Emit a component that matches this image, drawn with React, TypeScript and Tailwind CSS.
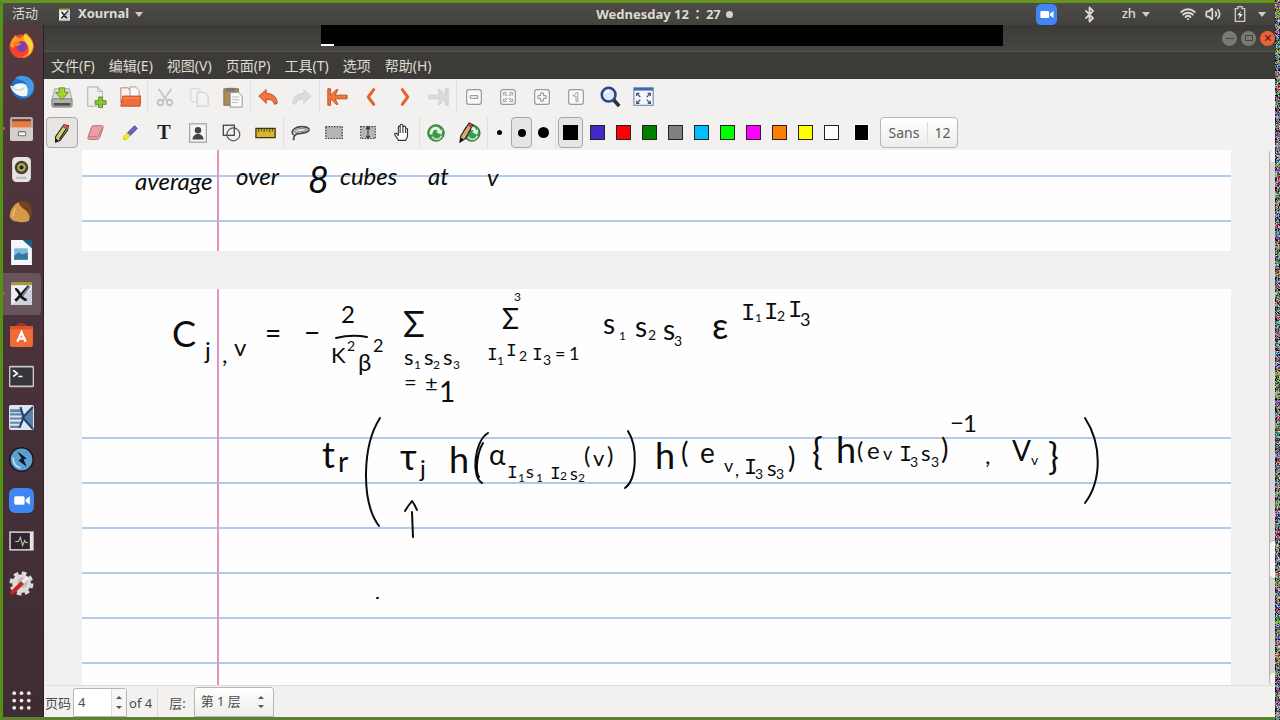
import { FC, ReactNode } from "react"
import { Bluetooth, Wifi, Volume2 } from "lucide-react"

interface IconProps{
    children:ReactNode,
    className?:string,
}
const Icon:FC<IconProps> = ({children,className="w-6 h-6"})=>(
    <svg viewBox="0 0 24 24" fill="none" className={className} aria-hidden="true">{children}</svg>
)

const ZoomLogo = ()=>(
    <>
        <rect width="24" height="24" rx="6" fill="#3f86f5"/>
        <rect x="5" y="8" width="10" height="8" rx="1.5" fill="#fff"/>
        <path d="M16 11l4-3v8l-4-3z" fill="#fff"/>
    </>
)
const XournalLogo = ()=>(
    <>
        <rect x="2" y="2" width="20" height="21" fill="#f0f0f2"/>
        <rect x="2" y="1" width="20" height="3" fill="#a59a3c"/>
        <path d="M2 23l20-16v16z" fill="#cfd2da"/>
        <path d="M6 8c4-1 4 10 11 10M19 5L8 17l-2 2" stroke="#15151c" strokeWidth="2.6"/>
        <path d="M20 5l-7 9" stroke="#6d87ae" strokeWidth="2"/>
    </>
)

const launchers:{name:string,icon:ReactNode,running?:boolean,active?:boolean}[] = [
    {name:"Firefox",icon:<>
        <circle cx="12" cy="13" r="11.5" fill="#f4432f"/>
        <path d="M1 12C2 7 5 4 6 2c1 2 3 3 5 3 2-2 4-3 5-5 5 4 8 8 7.500 14-1 7-7 10-12 9 6-1 9-5 8-10-1-4-4-5-7-5C8 8 5 10 5 14c-2 0-4-1-4-2z" fill="#ff9a1f"/>
        <path d="M15 1c4 3 8 7 8 12-1 4-3 7-5 8 2-5 1-9-2-12-2-2-2-5-1-8z" fill="#ffd43a"/>
        <circle cx="12" cy="13" r="5" fill="#7a3fb4"/>
        <path d="M4 9c3-1 5 0 8 1-1 2-4 2-5 3-1-1-3-2-3-4z" fill="#ff7a22"/>
    </>},
    {name:"Thunderbird",icon:<>
        <circle cx="13" cy="12" r="11" fill="#1f6fc4"/>
        <path d="M6 3c6-5 17-1 18 7 0 7-4 11-9 12 5-6 4-13-1-16-3-2-6-2-8-3z" fill="#3f9be8"/>
        <path d="M1 10l3 1c2-3 8-4 12-2 2 2 3 6 1 11-5 2-13-1-16-10z" fill="#f3f6fa"/>
        <path d="M3 12c4 3 8 4 12 0" stroke="#c2cfdd" strokeWidth="1.200"/>
    </>},
    {name:"Files",running:true,icon:<>
        <rect x="1" y="1" width="22" height="23" rx="2" fill="#b5afa8"/>
        <rect x="3" y="3" width="18" height="3" fill="#6b4436"/>
        <path d="M3 5h18v6H3z" fill="#ee7a3e"/>
        <path d="M1 11h22v11a2 2 0 0 1-2 2H3a2 2 0 0 1-2-2z" fill="#d3cfca"/>
        <rect x="9" y="15" width="7" height="4" rx="1" fill="#f4f2f0" stroke="#77716b"/>
    </>},
    {name:"Rhythmbox",icon:<>
        <rect x="3" y="0" width="18" height="24" rx="4" fill="#e6e4e2"/>
        <circle cx="12" cy="10" r="6.500" fill="#44443a"/>
        <circle cx="12" cy="10" r="4" fill="#b9b047"/>
        <circle cx="12" cy="10" r="2" fill="#2b2b22"/>
        <path d="M7 20h10" stroke="#bdbab7" strokeWidth="2"/>
    </>},
    {name:"Acorn",icon:<>
        <path d="M8 3c7-3 14 1 14 9 0 3-1 5-3 8z" fill="#74441f"/>
        <path d="M19 4c1-2 3-3 4-2v3" stroke="#5b3418" strokeWidth="1.500"/>
        <path d="M9 3C3 6 0 13 1 18c3 5 12 5 18 3 2-4 0-8-4-11-3-2-5-4-6-7z" fill="#d49a4a"/>
        <path d="M6 9c-2 3-2 6-2 8" stroke="#e9bd77" strokeWidth="1.500"/>
    </>},
    {name:"LibreOffice Draw",icon:<>
        <path d="M2 0h13l7 8v16H2z" fill="#f4f8fa"/>
        <path d="M13 0h9v8z" fill="#1f5f86"/>
        <rect x="5" y="8" width="13" height="11" fill="#7db9dc"/>
        <path d="M5 15l4-3 4 2 5-2v7H5z" fill="#33789f"/>
    </>},
    {name:"Xournal",running:true,active:true,icon:<XournalLogo/>},
    {name:"Ubuntu Software",icon:<>
        <path d="M7 5c0-5 10-5 10 0" stroke="#b8352a" strokeWidth="2"/>
        <path d="M1 3h22v18a2 2 0 0 1-2 2H3a2 2 0 0 1-2-2z" fill="#ef6c38"/>
        <path d="M1 3h22v3H1z" fill="#d9542b"/>
        <path d="M8 18l4-9 4 9M9 15h6" stroke="#fff" strokeWidth="2.200"/>
    </>},
    {name:"Terminal",icon:<>
        <rect x="0.500" y="2.500" width="23" height="19" rx="1" fill="#35353a" stroke="#c9c6c5" strokeWidth="1.600"/>
        <path d="M4 6l4 3-4 3M9 12h4" stroke="#fff" strokeWidth="1.600"/>
    </>},
    {name:"Xmgrace",icon:<>
        <rect width="24" height="24" rx="2" fill="#dde6f0"/>
        <path d="M1 4h10l3 3H1zM1 8h13v2H1zM1 12h12v2H1zM1 16h11v2H1zM1 20h9v2H1z" fill="#6483ad"/>
        <path d="M23 2L13 12l10 11z" fill="#5d7fae"/>
        <path d="M11 2l3 10-4 10M23 2L13 12l10 11" stroke="#24426e" strokeWidth="2"/>
    </>},
    {name:"Maple",icon:<>
        <circle cx="12" cy="12" r="11.200" fill="#5f9fd0" stroke="#121a28" strokeWidth="1.500"/>
        <path d="M4 10c0 6 3 9 7 10" stroke="#d9ebf8" strokeWidth="1.200"/>
        <path d="M8 4l9 7-3 1 3 7-8-6 3-2z" fill="#10182a"/>
    </>},
    {name:"Zoom",icon:<ZoomLogo/>},
    {name:"System Monitor",icon:<>
        <rect x="1" y="3" width="22" height="17" fill="#2e2530" stroke="#d5cdd2" strokeWidth="1.500"/>
        <path d="M20 3h3v17h-3z" fill="#e8e0e4"/>
        <path d="M6 12h3l2-4 2 8 2-5 1 2h2" stroke="#c9c3a0"/>
    </>},
    {name:"Settings",icon:<>
        <circle cx="12" cy="12" r="9" fill="#dedbda"/>
        <circle cx="12" cy="12" r="10" stroke="#dedbda" strokeWidth="3" strokeDasharray="4.500 3.350"/>
        <circle cx="13" cy="11" r="5" fill="#c2bcbb"/>
        <path d="M2 22L13 11" stroke="#c3272b" strokeWidth="4"/>
        <path d="M13 11l5-5" stroke="#f2f0ef" strokeWidth="3"/>
    </>},
]

const Arrow = ({d}:{d:string})=><path d={d} fill="#f0763c" stroke="#bd4a1c" strokeLinejoin="round"/>
const GreyBox = ({children}:{children:ReactNode})=>(
    <><rect x="4" y="4" width="16" height="16" rx="2.500" fill="#f8f8f7" stroke="#9a9a96" strokeWidth="1.300"/>{children}</>
)
const Recycle = ()=>(
    <>
        <circle cx="12" cy="12" r="9" fill="#3c9a4a" stroke="#267034"/>
        <path d="M5 13c0-9 10-10 12-4l2-1-1 6-6-3 2-1c-2-3-6-1-6 4z" fill="#e5f6e5"/>
        <path d="M18 15c-2 5-8 5-10 1" stroke="#bfe6c2" strokeWidth="1.800"/>
    </>
)
const Pencil = ()=>(
    <>
        <path d="M11 1l4 2-8 15-6 4 1-7z" fill="#d9a878" stroke="#222" strokeWidth="1.200"/>
        <path d="M1 22l1-5 3 2z" fill="#111"/>
        <path d="M10 3l4 2" stroke="#c23b3b" strokeWidth="2.500"/>
    </>
)

interface Tool{
    name:string,
    icon:ReactNode,
    active?:boolean,
}
const mainTools:Tool[][] = [
    [
        {name:"保存",icon:<>
            <path d="M4 3h16l3 12H1z" fill="#dadad8" stroke="#a5a5a2"/>
            <rect x="1" y="14" width="22" height="9" rx="1.500" fill="#b0b2af" stroke="#73756f"/>
            <path d="M3 20h18" stroke="#4c4e4a" strokeWidth="3"/>
            <path d="M9 2h6v5h4l-7 8-7-8h4z" fill="#a5d433" stroke="#5f8f14"/>
        </>},
        {name:"新建",icon:<>
            <path d="M3 1h11l5 5v16H3z" fill="#f0f0ee" stroke="#aaa"/>
            <path d="M14 1v5h5" stroke="#aaa"/>
            <path d="M15 12h4v4h4v4h-4v4h-4v-4h-4v-4h4z" fill="#8dc63a" stroke="#54861a"/>
        </>},
        {name:"打开",icon:<>
            <path d="M2 2h8l2 3h8v13H2z" fill="#fdf3ee" stroke="#b27a60"/>
            <path d="M12 1h6l4 4v8H12z" fill="#fafafa" stroke="#999"/>
            <path d="M4 11h20l-1 11H2z" fill="#f06c38" stroke="#c24a1c"/>
            <path d="M4 13h18" stroke="#f99a72"/>
        </>},
    ],
    [
        {name:"剪切",icon:<>
            <path d="M5 3l9 13M19 3l-9 13" stroke="#c9c7c5" strokeWidth="2"/>
            <circle cx="7" cy="18" r="3" stroke="#c4c2c0" strokeWidth="2"/>
            <circle cx="17" cy="18" r="3" stroke="#c4c2c0" strokeWidth="2"/>
        </>},
        {name:"复制",icon:<>
            <path d="M3 3h10v14H3z" fill="#f3f2f1" stroke="#d3d1cf"/>
            <path d="M10 7h8l4 4v11H10z" fill="#f3f2f1" stroke="#cac8c6"/>
        </>},
        {name:"粘贴",icon:<>
            <path d="M2 3h16v18H2z" fill="#a98a58" stroke="#7d6b4c"/>
            <path d="M5 2h9v4H5z" fill="#77766f"/>
            <path d="M9 7h9l4 4v12H9z" fill="#fafafa" stroke="#8f8f8b"/>
            <path d="M11 12h8M11 15h8M11 18h6" stroke="#b4b4b0"/>
        </>},
    ],
    [
        {name:"撤销",icon:<Arrow d="M2 11l8-7v4c7 0 12 4 12 11l-3 1c-1-4-4-6-9-5v4z"/>},
        {name:"重做",icon:<path d="M22 11l-8-7v4C7 8 2 12 2 19l3 1c1-4 4-6 9-5v4z" fill="#dddbd9" stroke="#d4d2d0"/>},
    ],
    [
        {name:"第一页",icon:<Arrow d="M2 3h3v7l6-6h2l-3 6h13v4H10l3 6h-2l-6-6v7H2z"/>},
        {name:"上一页",icon:<path d="M15 4l-6 8 6 8" stroke="#e2622c" strokeWidth="3.200" strokeLinecap="round" strokeLinejoin="round"/>},
        {name:"下一页",icon:<path d="M9 4l6 8-6 8" stroke="#e2622c" strokeWidth="3.200" strokeLinecap="round" strokeLinejoin="round"/>},
        {name:"最后一页",icon:<path d="M1 10h12l-2-6h2l6 6V3h3v18h-3v-7l-6 6h-2l2-6H1z" fill="#dddbd9" stroke="#cfcdcb"/>},
    ],
    [
        {name:"缩小",icon:<GreyBox><path d="M8 10.500h8v3H8z" stroke="#888"/></GreyBox>},
        {name:"页宽",icon:<GreyBox><path d="M7 10V7h3l-1 1 2 2-1 1-2-2zM17 10V7h-3l1 1-2 2 1 1 2-2zM7 14v3h3l-1-1 2-2-1-1-2 2zM17 14v3h-3l1-1-2-2 1-1 2 2z" stroke="#888" strokeWidth=".8"/></GreyBox>},
        {name:"放大",icon:<GreyBox><path d="M10.500 7.500h3v3h3v3h-3v3h-3v-3h-3v-3h3z" stroke="#888"/></GreyBox>},
        {name:"正常大小",icon:<GreyBox><path d="M9 10c2-1 3-3 5-3v10h-2v-6h-3z" stroke="#999"/></GreyBox>},
        {name:"设置缩放",icon:<>
            <path d="M16 15l6 7" stroke="#2c2c40" strokeWidth="4"/>
            <circle cx="10.500" cy="9.500" r="7.500" fill="#dfe8f6" stroke="#34408e" strokeWidth="2.800"/>
            <path d="M7 8c1-2 3-3 5-2" stroke="#fff" strokeWidth="1.500"/>
        </>},
        {name:"全屏",icon:<>
            <rect x="1" y="2" width="21" height="19" fill="#f3f6fb" stroke="#5575a8"/>
            <path d="M1 2h21v3H1z" fill="#3d6bb3"/>
            <path d="M4 11V8h3M16 8h3v3M4 16v3h3M16 19h3v-3M4 8l4 4M19 8l-4 4M4 19l4-4M19 19l-4-4" stroke="#444f68" strokeWidth="1.200"/>
        </>},
    ],
]

const penTools:Tool[][] = [
    [
        {name:"钢笔",active:true,icon:<>
            <path d="M14 3l5 1-1 5-8 11-5 2 0-6z" fill="#d3cf6a" stroke="#222" strokeWidth="1.200"/>
            <path d="M14 3l5 1-1 4-5-2z" fill="#e04848"/>
            <path d="M17 7l-8 12" stroke="#222" strokeWidth="1.200"/>
            <path d="M5 22l0-4 3 2z" fill="#111"/>
        </>},
        {name:"橡皮",icon:<>
            <path d="M9 4h9c2 0 2 1 1.500 3L16 17c-1 2-2 2-3 2H5c-2 0-2-1-1.500-3L7 6c0-1 1-2 2-2z" fill="#eda0a4" stroke="#a5686c"/>
            <path d="M4 16h9c1 0 2-1 2-2l4-8" stroke="#b97b7f"/>
        </>},
        {name:"荧光笔",icon:<>
            <path d="M17 4l3 3-8 8-3-3z" fill="#6a62c8" stroke="#55519a"/>
            <path d="M9 12l3 3-4 4H5v-3z" fill="#f5ee22" stroke="#cfc423"/>
        </>},
        {name:"文本",icon:<text x="12" y="19" textAnchor="middle" className="font-['Liberation_Serif',serif] font-bold text-[22px]" fill="#1f1f1f">T</text>},
        {name:"图像",icon:<>
            <rect x="3" y="2" width="18" height="20" fill="#f5f5f4" stroke="#888"/>
            <circle cx="12" cy="9" r="3.500" fill="#444"/>
            <path d="M6 19c0-8 12-8 12 0z" fill="#444"/>
        </>},
        {name:"形状识别",icon:<>
            <rect x="2.500" y="3.500" width="12" height="11" stroke="#333" strokeWidth="1.300"/>
            <circle cx="13.500" cy="13.500" r="7" stroke="#555" strokeWidth="1.300"/>
        </>},
        {name:"直尺",icon:<>
            <path d="M1 7h21v10H1z" fill="#d7b52c" stroke="#3e3618" strokeWidth="1.400"/>
            <path d="M4 7v4M7 7v3M10 7v4M13 7v3M16 7v4M19 7v3" stroke="#3e3618"/>
        </>},
    ],
    [
        {name:"选择区域",icon:<>
            <path d="M5 14C1 11 6 5 14 5c8 0 10 4 5 6-4 2-9 1-12 3-2 1-2 4-2 6" stroke="#4d4d4d" strokeWidth="2"/>
            <path d="M6 12c0-3 4-5 9-5 5 0 5 2 1 3-3 1-6 0-9 2" stroke="#8d8d8d" strokeWidth="1.300"/>
        </>},
        {name:"选择矩形",icon:<rect x="3" y="5" width="18" height="13" fill="#b5b5b3" stroke="#333" strokeWidth="1.300" strokeDasharray="1.500 1.500"/>},
        {name:"垂直空间",icon:<>
            <rect x="4" y="5" width="16" height="13" fill="#b5b5b3" stroke="#333" strokeWidth="1.300" strokeDasharray="1.500 1.500"/>
            <path d="M12 5v13M10 8l2-3 2 3M10 15l2 3 2-3" stroke="#333" strokeWidth="1.200"/>
        </>},
        {name:"手形工具",icon:<path d="M8 20c-1-3-4-5-4-7 1-2 3 0 4 2V6c0-2 2-2 2 0V4c0-2 3-2 3 0v2c0-2 3-2 3 0v2c0-2 2-1 2 0v7c0 2-1 3-2 5zM10 6v6M13 6v6M16 8v4" fill="#fff" stroke="#333" strokeWidth="1.200"/>},
    ],
    [
        {name:"默认",icon:<Recycle/>},
        {name:"默认笔",icon:<><g className="translate-x-[2px]"><Recycle/></g><Pencil/></>},
    ],
]

const colours:[string,string][] = [
    ["蓝色","bg-[#4228c8]"],
    ["红色","bg-[#ff0000]"],
    ["绿色","bg-[#008000]"],
    ["灰色","bg-[#808080]"],
    ["浅蓝","bg-[#00bfff]"],
    ["浅绿","bg-[#00ff00]"],
    ["洋红","bg-[#ff00ff]"],
    ["橙色","bg-[#ff8000]"],
    ["黄色","bg-[#ffff00]"],
    ["白色","bg-white"],
]

const menus = ["文件(F)","编辑(E)","视图(V)","页面(P)","工具(T)","选项","帮助(H)"]

const pressed = "rounded-sm border border-[#a9a7a4] bg-[#e6e5e3]"

const Separator = ({tight}:{tight?:boolean})=><span className={tight ? "-mr-px h-8 w-px bg-[#e3e1df]" : "h-8 w-px bg-[#e3e1df]"}/>

const ToolGroups = ({groups,tight}:{groups:Tool[][],tight?:boolean})=>(
    <>
        {groups.map((group,i)=>(
            <div key={i} className="flex items-center">
                {group.map((tool)=>(
                    <button key={tool.name} aria-label={tool.name} className="flex h-[31px] w-[34px] items-center justify-center">
                        <span className={tool.active ? `flex h-[31px] w-8 items-center justify-center ${pressed}` : "flex"}><Icon className="h-[22px] w-[22px]">{tool.icon}</Icon></span>
                    </button>
                ))}
                {(tight || i<groups.length-1) && <Separator tight={tight}/>}
            </div>
        ))}
    </>
)

const Caret = ()=><svg viewBox="0 0 8 5" className="h-[5px] w-2" aria-hidden="true"><path d="M0 0h8L4 5z" fill="#d0ccc5"/></svg>

// [text, x, baseline, size class]
type Mark = [string,number,number,string]
const s12 = "text-[12px]", s14 = "text-[14px]", s18 = "text-[18px]", s22 = "text-[22px]", s24 = "text-[24px]", s28 = "text-[28px]", s36 = "text-[36px]"

const firstPage:Mark[] = [
    ["average",53,40,s24],["over",154,35,s24],["8",226,43,s36],["cubes",258,35,s24],["at",346,35,s24],["v",405,36,s24],
]
const secondPage:Mark[] = [
    ["C",90,58,s36],["j",123,70,s24],[",",140,74,s24],["v",152,67,s24],["=",183,54,s28],["−",222,54,s28],
    ["2",259,34,s24],["K",249,74,s22],["2",265,62,s14],["β",276,82,s24],["2",291,63,s18],
    ["Σ",321,48,s36],["s",322,76,s22],["1",332,80,s12],["s",342,76,s22],["2",351,80,s12],["s",361,76,s22],["3",371,80,s12],
    ["=",322,101,s22],["±",343,102,s22],["1",357,113,s28],
    ["Σ",420,40,s28],["3",432,12,s12],
    ["I",405,71,s18],["1",415,76,s12],["I",424,67,s18],["2",437,72,s14],["I",450,71,s18],["3",461,76,s14],["=",473,71,s18],["1",487,71,s18],
    ["s",521,45,s28],["1",537,51,s12],["s",553,48,s28],["2",566,51,s14],["s",581,51,s28],["3",592,57,s14],["ε",630,50,s36],
    ["I",659,31,s24],["1",673,33,s12],["I",682,30,s24],["2",695,32,s14],["I",706,28,s24],["3",718,37,s18],
    ["t",240,179,s36],["r",256,183,s28],["τ",318,181,s36],["j",338,188,s24],["h",367,184,s36],["α",407,176,s28],
    ["I",425,189,s18],["1",436,193,s12],["s",444,189,s18],["1",454,193,s12],["I",468,190,s18],["2",478,191,s12],["s",488,191,s18],["2",496,193,s12],
    ["(",502,175,s24],["v",511,177,s22],[")",525,175,s24],
    ["h",573,180,s36],["(",599,174,s28],["e",618,174,s28],["v",642,183,s18],[",",653,187,s18],["I",662,185,s22],["3",673,190,s14],["s",685,187,s22],["3",694,190,s14],
    [")",706,179,s28],["{",730,176,s36],["h",754,174,s36],["(",775,170,s24],["e",785,170,s24],["v",801,171,s18],["I",817,172,s22],["3",828,178,s14],["s",839,172,s22],["3",849,178,s14],
    [")",859,170,s28],["−",868,142,s24],["1",881,143,s24],[",",903,175,s24],["V",930,172,s28],["v",949,176,s14],["}",966,181,s36],
]

const Ink = ({marks}:{marks:Mark[]})=>(
    <g fill="#0c0c0c">
        {marks.map(([t,x,y,size],i)=>(
            <text key={i} x={x} y={y} className={t==="I" ? `font-['Liberation_Mono',monospace] ${size}` : `font-[Lato,'Open_Sans',sans-serif] ${size}`}>{t}</text>
        ))}
    </g>
)
const Rules = ({rows}:{rows:number[]})=>(
    <>
        {rows.map((y)=><rect key={y} x="0" y={y} width="100%" height="2" fill="#b0cbea"/>)}
        <rect x="135" y="0" width="2" height="100%" fill="#e592c4"/>
    </>
)

const TopBar = ()=>(
    <header className="flex h-[22px] shrink-0 items-center bg-linear-to-b from-[#4d4c48] to-[#42413d] text-[13px] text-[#dfdbd2]">
        <div className="flex flex-1 items-center">
            <button className="pl-[9px]">活动</button>
            <button className="flex items-center pl-5 font-bold">
                <Icon className="mr-[7px] h-[13px] w-[13px]"><XournalLogo/></Icon>
                Xournal
                <span className="pl-[6px]"><Caret/></span>
            </button>
        </div>
        <button className="flex items-center gap-[5px] pl-[60px] font-bold">
            <span>Wednesday 12<span className="px-[2px] font-['Noto_Sans_CJK_JP',sans-serif]" lang="ja">：</span>27</span>
            <span className="h-[7px] w-[7px] rounded-full bg-[#d6d2ca]"/>
        </button>
        <div className="flex flex-1 items-center justify-end pr-[9px]">
            <Icon className="h-[21px] w-[21px]"><ZoomLogo/></Icon>
            <Bluetooth className="ml-6 h-[17px] w-[17px]" strokeWidth={2.500}/>
            <button className="ml-6 flex items-center gap-[6px] font-medium">zh <Caret/></button>
            <Wifi className="ml-[30px] h-4 w-4" strokeWidth={3}/>
            <Volume2 className="ml-[9px] h-4 w-4" strokeWidth={2.500}/>
            <Icon className="ml-[11px] h-4 w-4">
                <path d="M5 4h4V1h6v3h4v19H5z" stroke="#d0ccc5" strokeWidth="2"/>
                <path d="M14 7l-6 7h4l-2 6 6-8h-4z" fill="#fff"/>
            </Icon>
            <span className="ml-[10px]"><Caret/></span>
        </div>
    </header>
)

const Launcher = ()=>(
    <nav className="flex w-[41px] shrink-0 flex-col border-r border-[#2c1e25] bg-linear-to-b from-[#54393f] via-[#48313a] to-[#3f2c33]">
        <div className="flex flex-1 flex-col pb-[79px]">
            {launchers.map((app)=>(
                <button key={app.name} aria-label={app.name} className={app.active ? "relative mr-[2px] flex flex-1 items-center rounded-r-sm bg-[#68545d] pl-[6px]" : "relative flex flex-1 items-center pl-[6px]"}>
                    {app.running && <span className="absolute left-0 h-[3px] w-[2px] bg-[#d8472c]"/>}
                    <Icon className="h-[25px] w-[25px]">{app.icon}</Icon>
                </button>
            ))}
        </div>
        <button aria-label="显示应用程序" className="flex h-[34px] shrink-0 items-center pl-[6px]">
            <Icon className="h-[25px] w-[25px]">
                {[5,12,19].map((y)=>[5,12,19].map((x)=><circle key={`${x}-${y}`} cx={x} cy={y} r="1.800" fill="#eee9eb"/>))}
            </Icon>
        </button>
    </nav>
)

const TitleBar = ()=>(
    <div className="flex h-[27px] shrink-0 border-b border-[#55544f] bg-linear-to-b from-[#3b3a36] to-[#474641]">
        <div className="ml-[277px] flex h-[21px] flex-1 items-end bg-black"><span className="h-[2px] w-[13px] bg-white"/></div>
        <div className="flex w-[272px] items-center justify-end gap-1">
            <button aria-label="最小化" className="flex h-[15px] w-[15px] items-center justify-center rounded-full bg-[#7b7975]"><span className="h-px w-2 bg-[#44433f]"/></button>
            <button aria-label="最大化" className="flex h-[15px] w-[15px] items-center justify-center rounded-full bg-[#7b7975]"><span className="h-[6px] w-2 border border-[#44433f]"/></button>
            <button aria-label="关闭" className="flex h-[15px] w-[15px] items-center justify-center rounded-full bg-[#ee6138]"><Icon className="h-2 w-2"><path d="M4 4l16 16M20 4L4 20" stroke="#4b1d0e" strokeWidth="3.500"/></Icon></button>
        </div>
    </div>
)

const Toolbars = ()=>(
    <div className="flex shrink-0 flex-col bg-[#f2f1f0] pl-px">
        <div className="flex h-9 items-center"><ToolGroups groups={mainTools}/></div>
        <div className="flex h-[35px] items-center">
            <ToolGroups groups={penTools} tight/>
            <button aria-label="细" className="flex h-[31px] w-[24px] items-center justify-center"><span className="h-[5px] w-[5px] rounded-full bg-black"/></button>
            <button aria-label="中" className={`flex h-[31px] w-[21px] items-center justify-center ${pressed}`}><span className="h-2 w-2 rounded-full bg-black"/></button>
            <button aria-label="粗" className="flex h-[31px] w-[23px] items-center justify-center"><span className="h-[11px] w-[11px] rounded-full bg-black"/></button>
            <Separator/>
            <div className="flex pl-[2px]">
                <button aria-label="黑色" className={`mr-px flex h-[31px] w-[25px] items-center justify-center ${pressed}`}><span className="h-[15px] w-[15px] bg-black"/></button>
                {colours.map(([name,bg])=>(
                    <button key={name} aria-label={name} className="flex h-[31px] w-[26px] items-center justify-center"><span className={`h-[15px] w-[15px] border border-[#222] ${bg}`}/></button>
                ))}
            </div>
            <button aria-label="选择颜色" className="ml-2 flex h-[31px] w-[18px] items-center justify-center"><span className="h-[17px] w-[15px] border border-white bg-black"/></button>
            <button className="ml-[10px] flex h-[31px] w-[78px] items-center rounded-[4px] border border-[#b8b6b3] bg-linear-to-b from-white to-[#ededeb] text-[14px] text-[#5a5a5a]">
                <span className="w-[47px] border-r border-[#dddbd9] text-center">Sans</span>
                <span className="flex-1 text-center">12</span>
            </button>
        </div>
    </div>
)

const Pages = ()=>(
    <main className="flex min-h-0 flex-1 bg-[#f1efef]">
        <div className="flex min-w-0 flex-1 flex-col gap-[38px] overflow-hidden px-[38px]">
            <svg className="h-[101px] w-full shrink-0 bg-[#fefefe] italic" role="img" aria-label="第 3 页">
                <Rules rows={[25,70]}/>
                <Ink marks={firstPage}/>
            </svg>
            <svg className="min-h-0 w-full flex-1 bg-[#fefefe]" role="img" aria-label="第 4 页">
                <Rules rows={[148,193,238,283,328,373]}/>
                <Ink marks={secondPage}/>
                <g stroke="#0c0c0c" strokeWidth="2" strokeLinecap="round" strokeLinejoin="round" fill="none">
                    <path d="M254 49q16-4 31-1"/>
                    <path d="M298 129c-18 28-19 84-1 108"/>
                    <path d="M406 144c-14 8-17 44-6 50M401 154c-6 10-8 28-4 34"/>
                    <path d="M546 142c10 16 9 48-3 57"/>
                    <path d="M1003 129c17 26 17 62 0 85"/>
                    <path d="M323 222q3-5 7-10q3 4 5 9M330 223l1 25"/>
                    <path d="M295 309h1"/>
                </g>
            </svg>
        </div>
        <div className="flex w-[6px] flex-col justify-between rounded-l-sm border-l border-[#b5b3b1] bg-[#d6d5d4]">
            <span className="h-3 rounded-l-sm bg-[#f4f3f2]"/>
            <span className="mt-auto mb-[94px] h-[39px] rounded-l-sm border-y border-[#b5b3b1] bg-[#f7f6f6]"/>
            <span className="h-3 rounded-l-sm bg-[#f4f3f2]"/>
        </div>
    </main>
)

const StatusBar = ()=>(
    <footer className="flex h-8 shrink-0 items-end border-t border-[#e0dedd] bg-[#f2f1f0] text-[13px] text-[#4c4c4c]">
        <label htmlFor="page" className="pl-px leading-[28px]">页码</label>
        <div className="ml-[2px] flex h-[29px] w-[54px] rounded-t-[3px] border border-[#b8b6b3] bg-white">
            <input id="page" defaultValue="4" className="min-w-0 flex-1 pl-1 outline-none"/>
            <div className="flex w-[15px] flex-col items-center justify-evenly border-l border-[#dddbd9] bg-[#f7f6f5]">
                <button aria-label="下一页码"><svg viewBox="0 0 6 3" className="h-[3px] w-[6px]"><path d="M0 3h6L3 0z" fill="#555"/></svg></button>
                <button aria-label="上一页码"><svg viewBox="0 0 6 3" className="h-[3px] w-[6px]"><path d="M0 0h6L3 3z" fill="#555"/></svg></button>
            </div>
        </div>
        <span className="pl-[2px] leading-[28px]">of 4</span>
        <span className="ml-[5px] h-7 w-px bg-[#dddbd9]"/>
        <label htmlFor="layer" className="pl-[11px] leading-[28px]">层:</label>
        <div className="relative ml-2 flex h-[30px] w-[80px] items-center rounded-t-[3px] border border-[#b8b6b3] bg-linear-to-b from-white to-[#ededeb]">
            <select id="layer" className="w-full appearance-none pl-[6px] outline-none"><option>第 1 层</option></select>
            <svg viewBox="0 0 6 12" className="pointer-events-none absolute right-[9px] h-3 w-[6px]"><path d="M0 3h6L3 0zM0 9h6l-3 3z" fill="#555"/></svg>
        </div>
    </footer>
)

const App = ()=>{
    return(
        <div className="flex h-screen overflow-hidden bg-[#f2f1f0] font-['Noto_Sans','Noto_Sans_CJK_SC',sans-serif]">
            <div className="flex min-w-0 flex-1 flex-col border-y-[3px] border-l-[3px] border-t-[#66941c] border-b-[#5f8032] border-l-[#559114]">
                <TopBar/>
                <div className="flex min-h-0 flex-1">
                    <Launcher/>
                    <div className="flex min-w-0 flex-1 flex-col">
                        <TitleBar/>
                        <div className="flex h-[27px] shrink-0 items-center bg-[#3c3b37] text-[14px] text-[#dfdbd2]">
                            {menus.map((menu)=><button key={menu} className="px-[7px]">{menu}</button>)}
                        </div>
                        <Toolbars/>
                        <Pages/>
                        <StatusBar/>
                    </div>
                </div>
            </div>
            <svg className="h-full w-[5px] shrink-0 bg-[#202020]" aria-hidden="true">
                <filter id="static" x="0" y="0" width="100%" height="100%">
                    <feTurbulence type="turbulence" baseFrequency="0.9" numOctaves="2" seed="4"/>
                    <feColorMatrix values="2 0 0 0 -0.3  0 2 0 0 -0.3  0 0 2 0 -0.3  0 0 0 0 1"/>
                </filter>
                <rect width="100%" height="100%" filter="url(#static)"/>
            </svg>
        </div>
    )
}

export default App
